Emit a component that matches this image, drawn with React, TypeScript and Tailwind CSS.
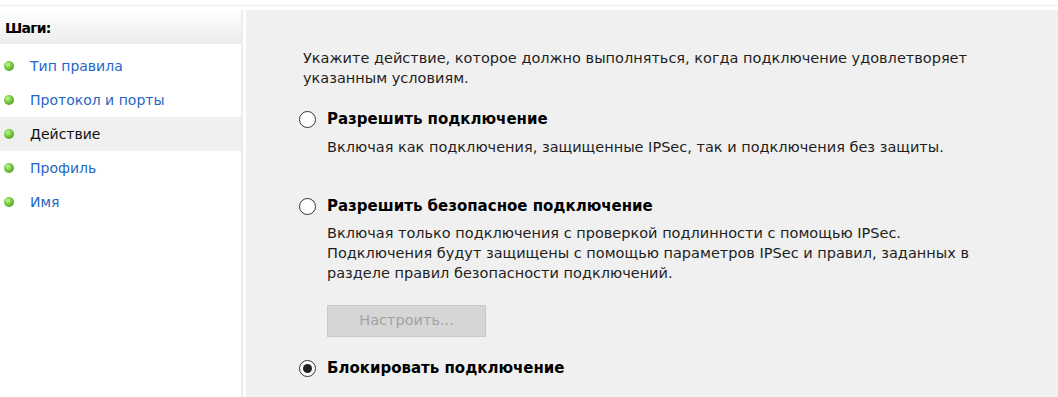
import React from "react";

const font = { fontFamily: '"DejaVu Sans", Verdana, sans-serif' };

function Bullet() {
  return (
    <span
      className="inline-block w-[10px] h-[10px] rounded-full shrink-0"
      style={{ background: "radial-gradient(circle at 38% 35%, #c4f59a 0%, #72c63c 45%, #3b8a1c 100%)" }}
    />
  );
}

function Radio({ checked }: { checked?: boolean }) {
  return (
    <span className="w-[17px] h-[17px] rounded-full border border-[#333] bg-white flex items-center justify-center shrink-0">
      {checked && <span className="w-[9px] h-[9px] rounded-full bg-[#222]" />}
    </span>
  );
}

const steps = [
  { t: "Тип правила", active: false },
  { t: "Протокол и порты", active: false },
  { t: "Действие", active: true },
  { t: "Профиль", active: false },
  { t: "Имя", active: false },
];

export default function App() {
  return (
    <div className="w-[1058px] h-[397px] bg-white overflow-hidden text-[14.5px] text-[#1e1e1e]" style={font}>
      <div className="h-[5px]" />
      <div className="h-[1px] bg-[#ececec]" />
      <div className="h-[4px]" />
      <div className="flex h-[387px]">
        <div className="w-[241px] bg-white flex flex-col text-[14px]">
          <div className="h-[34px] flex items-center pl-[5px] pt-[2px] font-bold text-[14px] text-black bg-gradient-to-b from-white to-[#ececec] tracking-[-0.8px]">
            Шаги:
          </div>
          <div className="h-[5px]" />
          {steps.map((s) => (
            <div
              key={s.t}
              className={`h-[34px] flex items-center pl-[4px] gap-[16px] ${s.active ? "bg-[#f0f0f0] text-[#111]" : "text-[#1f66c7]"}`}
            >
              <Bullet />
              <span>{s.t}</span>
            </div>
          ))}
        </div>
        <div className="w-[2px] bg-[#ececec]" />
        <div className="w-[3px] bg-white" />
        <div className="flex-1 bg-[#f0f0f0] pl-[57px] pt-[38px]">
          <p className="leading-[20px] w-[680px]">
            Укажите действие, которое должно выполняться, когда подключение удовлетворяет указанным условиям.
          </p>
          <div className="mt-[21px] flex items-center gap-[11px] -ml-[4px] h-[20px]">
            <Radio />
            <span className="font-bold text-[15px] text-black">Разрешить подключение</span>
          </div>
          <p className="ml-[24px] mt-[8px] leading-[20px]">
            Включая как подключения, защищенные IPSec, так и подключения без защиты.
          </p>
          <div className="mt-[39px] flex items-center gap-[11px] -ml-[4px] h-[20px]">
            <Radio />
            <span className="font-bold text-[15px] text-black">Разрешить безопасное подключение</span>
          </div>
          <p className="ml-[24px] mt-[7px] leading-[20px] w-[690px]">
            Включая только подключения с проверкой подлинности с помощью IPSec.
            <br />
            Подключения будут защищены с помощью параметров IPSec и правил, заданных в
            <br />
            разделе правил безопасности подключений.
          </p>
          <div className="ml-[24px] mt-[22px] w-[159px] h-[32px] bg-[#d6d6d6] border border-[#c9c9c9] flex items-center justify-center text-[#a2a2a2]">
            Настроить...
          </div>
          <div className="mt-[21px] flex items-center gap-[11px] -ml-[4px] h-[20px]">
            <Radio checked />
            <span className="font-bold text-[15px] text-black">Блокировать подключение</span>
          </div>
        </div>
      </div>
    </div>
  );
}
